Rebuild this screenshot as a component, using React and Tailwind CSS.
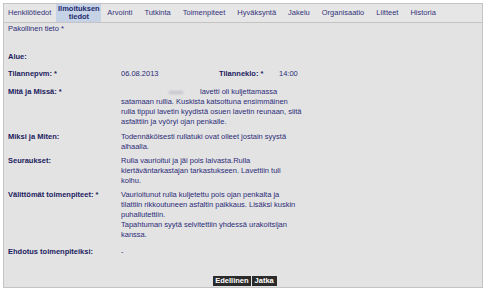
import React from 'react';

const tabs = [
  'Henkilötiedot',
  'Ilmoituksen tiedot',
  'Arvointi',
  'Tutkinta',
  'Toimenpiteet',
  'Hyväksyntä',
  'Jakelu',
  'Organisaatio',
  'Liitteet',
  'Historia',
];

const Row = ({ label, className = '', children }) => (
  <div className={`grid grid-cols-[113px_1fr] ${className}`}>
    <div className="font-bold text-[#1b1b5e]">{label}</div>
    <div className="text-[#2c2c78]">{children}</div>
  </div>
);

const Lines = ({ lines }) => (
  <div>
    {lines.map((l, i) => (
      <div key={i}>{l}</div>
    ))}
  </div>
);

export default function App() {
  return (
    <div className="w-[489px] h-[293px] bg-white pt-[3px] pl-[3px] font-['Liberation_Sans',Arial,sans-serif] text-[7.5px] leading-[10px]">
      <div className="w-[480px] border border-[#c4c4c4] bg-[#e3e3e3]">
        {/* Tabs */}
        <div className="flex h-[19px] items-stretch border-b border-[#c4c4c4] bg-[#e6e6e6]">
          {tabs.map((t, i) =>
            i === 1 ? (
              <div
                key={t}
                className="flex w-[45px] flex-col items-center justify-center bg-[#c6d3e6] text-center font-bold leading-[8px] text-[#1e2a6e]"
              >
                <span>Ilmoituksen</span>
                <span>tiedot</span>
              </div>
            ) : (
              <div
                key={t}
                className={`flex items-center text-[#34347a] ${i === 0 ? 'pl-[4px] pr-[5px]' : 'px-[6px]'}`}
              >
                {t}
              </div>
            )
          )}
        </div>

        {/* Content */}
        <div className="px-[4px] pt-[1px] pb-[1px]">
          <div className="text-[#2c2c78]">Pakollinen tieto *</div>

          <Row label="Alue:" className="mt-[18px]" />

          <Row label="Tilannepvm: *" className="mt-[7px]">
            <div className="flex">
              <span className="w-[98px]">06.08.2013</span>
              <span className="w-[60px] font-bold text-[#1b1b5e]">Tilanneklo: *</span>
              <span>14:00</span>
            </div>
          </Row>

          <Row label="Mitä ja Missä: *" className="mt-[8px]">
            <div>
              <span className="inline-block w-[79px]">
                <span className="ml-[48px] inline-block h-[3px] w-[14px] bg-[#c4c4ce] align-middle blur-[1px]" />
              </span>
              lavetti oli kuljettamassa
            </div>
            <div>satamaan rullia. Kuskista katsottuna ensimmäinen</div>
            <div>rulla tippui lavetin kyydistä osuen lavetin reunaan, siitä</div>
            <div>asfalttiin ja vyöryi ojan penkalle.</div>
          </Row>

          <Row label="Miksi ja Miten:" className="mt-[5px]">
            <Lines lines={['Todennäköisesti rullatuki ovat olleet jostain syystä', 'alhaalla.']} />
          </Row>

          <Row label="Seuraukset:" className="mt-[4px]">
            <Lines
              lines={[
                'Rulla vaurioitui ja jäi pois laivasta.Rulla',
                'kiertäväntarkastajan tarkastukseen. Lavettiin tuli',
                'kolhu.',
              ]}
            />
          </Row>

          <Row label="Välittömät toimenpiteet: *" className="mt-[4px]">
            <Lines
              lines={[
                'Vaurioitunut rulla kuljetettu pois ojan penkalta ja',
                'tilattiin rikkoutuneen asfaltin paikkaus. Lisäksi kuskin',
                'puhallutettiin.',
                'Tapahtuman syytä selvitettiin yhdessä urakoitsijan',
                'kanssa.',
              ]}
            />
          </Row>

          <Row label="Ehdotus toimenpiteiksi:" className="mt-[7px]">
            -
          </Row>

          <div className="mt-[19px] flex justify-center gap-[1px] pl-[4px]">
            <button className="h-[10px] bg-[#2b2b2b] px-[2px] font-bold leading-[10px] text-white">Edellinen</button>
            <button className="h-[10px] bg-[#2b2b2b] px-[3px] font-bold leading-[10px] text-white">Jatka</button>
          </div>
        </div>
      </div>
    </div>
  );
}
